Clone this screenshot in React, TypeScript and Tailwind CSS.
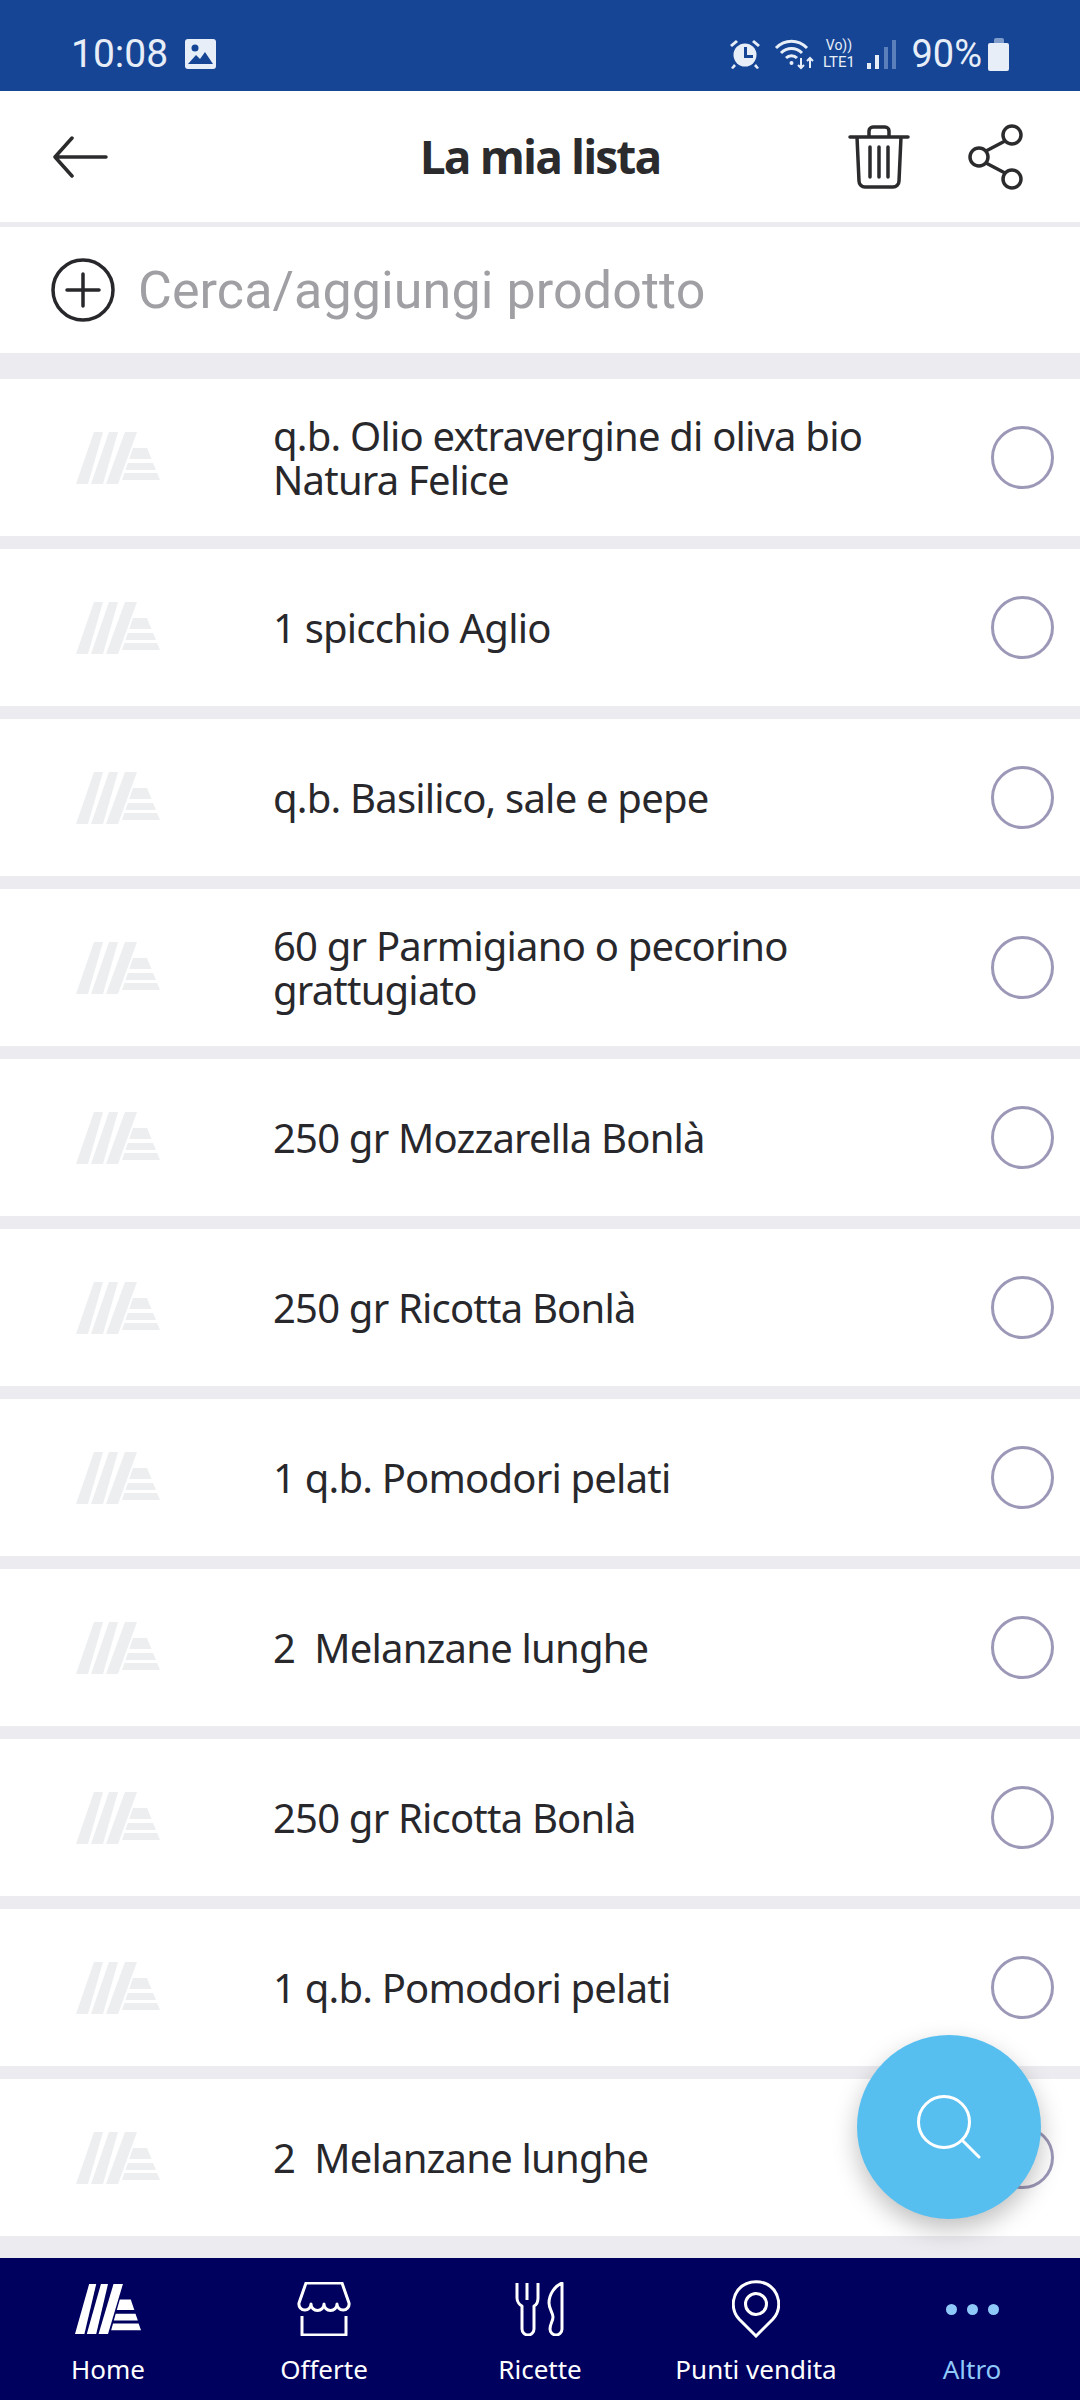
const items = [
  'q.b. Olio extravergine di oliva bio Natura Felice',
  '1 spicchio Aglio',
  'q.b. Basilico, sale e pepe',
  '60 gr Parmigiano o pecorino grattugiato',
  '250 gr Mozzarella Bonlà',
  '250 gr Ricotta Bonlà',
  '1 q.b. Pomodori pelati',
  '2  Melanzane lunghe',
  '250 gr Ricotta Bonlà',
  '1 q.b. Pomodori pelati',
  '2  Melanzane lunghe',
];

function Logo({ className, fill }: { className: string; fill: string }) {
  return (
    <svg viewBox="0 0 84 52" preserveAspectRatio="none" className={className} fill={fill}>
      <path d="M18 0h9L12 52H0z" />
      <path d="M33 0h9L27 52H15z" />
      <path d="M49 0h12L42 52H30z" />
      <path d="M57 16h14l4.500 11H53.200z" />
      <path d="M51.800 31H77l3 7H49.400z" />
      <path d="M48.400 41H81l3 7H46z" />
    </svg>
  );
}

function ListRow({ label }: { label: string }) {
  return (
    <div className="flex h-[157px] shrink-0 items-center bg-white pl-[76px] pr-[26px]">
      <Logo className="h-[52px] w-[84px] shrink-0" fill="#eceef0" />
      <p className="ml-[113px] w-[640px] whitespace-pre-wrap text-[40px] leading-[44px] tracking-[-0.8px] text-[#28282c]">{label}</p>
      <span className="ml-auto h-[63px] w-[63px] shrink-0 rounded-full border-[3px] border-[#9c98b8]" />
    </div>
  );
}

function NavItem({ label, active, children }: { label: string; active?: boolean; children: React.ReactNode }) {
  return (
    <div className="flex flex-col items-center">
      <div className="flex h-[58px] items-center justify-center">{children}</div>
      <span className={`mt-[13px] text-[26px] leading-[36px] ${active ? 'text-[#8ec9f9]' : 'text-white'}`}>{label}</span>
    </div>
  );
}

export default function App() {
  return (
    <div className="relative flex h-[2400px] w-[1080px] flex-col overflow-hidden bg-[#ecebef] font-['Noto_Sans',sans-serif]">
      {/* status bar */}
      <div className="flex h-[91px] shrink-0 items-center bg-[#164595] pl-[71px] pr-[71px] pt-[17px] font-['Roboto',sans-serif] text-[#e8eef8]">
        <span className="text-[39px] leading-none">10:08</span>
        <svg viewBox="0 0 31 30" className="ml-[17px] h-[30px] w-[31px]">
          <rect width="31" height="30" rx="3" fill="#e8eef8" />
          <circle cx="10" cy="9" r="3.5" fill="#164595" />
          <path d="M3 25l8-9 4 4 5-7 8 12z" fill="#164595" />
        </svg>
        <svg viewBox="0 0 32 30" className="ml-auto h-[30px] w-[32px]" fill="#e8eef8">
          <circle cx="16" cy="16" r="11.5" />
          <path d="M15 8h3v8h6v3h-9z" fill="#164595" />
          <path d="M1 6l6-5 2 2-6 5zM31 6l-6-5-2 2 6 5zM5 25l-3 4 2 1 3-3zM27 25l3 4-2 1-3-3z" />
        </svg>
        <svg viewBox="0 0 42 32" className="ml-[13px] h-[32px] w-[42px]" fill="none" stroke="#e8eef8" strokeWidth="3">
          <path d="M2 10c9-9 22-9 31 0M7 15c6-6 15-6 21 0M12 20c3-3 8-3 11 0" />
          <circle cx="17.5" cy="25" r="2" fill="#e8eef8" stroke="none" />
          <path d="M27 20v10M24 27l3 3 3-3M36 30V20M33 23l3-3 3 3" strokeWidth="2" />
        </svg>
        <div className="ml-[3px] flex w-[40px] flex-col items-center text-[14px] leading-[17px]">
          <span>Vo))</span>
          <span className="text-[15px]">LTE1</span>
        </div>
        <div className="ml-[8px] flex h-[29px] items-end gap-[4.5px]">
          <span className="h-[6px] w-[4px] bg-[#e8eef8]" />
          <span className="h-[14px] w-[4px] bg-[#e8eef8]" />
          <span className="h-[22px] w-[4px] bg-[#5b7fbb]" />
          <span className="h-[29px] w-[4px] bg-[#5b7fbb]" />
        </div>
        <span className="ml-[15px] text-[38px] leading-none">90%</span>
        <div className="ml-[6px] flex flex-col items-center">
          <span className="h-[5px] w-[10px] rounded-t-[2px] bg-[#7f9ccb]" />
          <span className="h-[28px] w-[21px] rounded-[2px] bg-[#e8eef8]" />
        </div>
      </div>

      {/* header */}
      <div className="relative flex h-[131px] shrink-0 items-center bg-white pl-[52px] pr-[56px]">
        <svg viewBox="0 0 56 42" className="h-[42px] w-[56px]" fill="none" stroke="#2b2b2e" strokeWidth="3.5" strokeLinecap="round" strokeLinejoin="round">
          <path d="M54 21H3M20 2L3 21l17 19" />
        </svg>
        <h1 className="absolute left-0 right-0 text-center font-['Open_Sans',sans-serif] text-[46px] font-bold tracking-[-1.9px] text-[#2b2b2e]">La mia lista</h1>
        <svg viewBox="0 0 62 64" className="ml-auto h-[64px] w-[62px]" fill="none" stroke="#2b2b2e" strokeWidth="3.5" strokeLinecap="round" strokeLinejoin="round">
          <path d="M2 12h58M21 12V6a4 4 0 0 1 4-4h12a4 4 0 0 1 4 4v6M9 12l2 44a6 6 0 0 0 6 6h28a6 6 0 0 0 6-6l2-44M22 22v30M31 22v30M40 22v30" />
        </svg>
        <svg viewBox="0 0 56 66" className="ml-[58px] h-[66px] w-[56px]" fill="none" stroke="#2b2b2e" strokeWidth="3.5">
          <circle cx="44" cy="11" r="9" />
          <circle cx="11" cy="33" r="9" />
          <circle cx="44" cy="55" r="9" />
          <path d="M37 17L18 27M18 39l19 10" />
        </svg>
      </div>

      {/* search */}
      <div className="mt-[5px] flex h-[126px] shrink-0 items-center bg-white pl-[51px]">
        <svg viewBox="0 0 64 64" className="h-[64px] w-[64px]" fill="none" stroke="#28282c" strokeWidth="3.5" strokeLinecap="round">
          <circle cx="32" cy="32" r="30" />
          <path d="M16 32h32M32 16v32" />
        </svg>
        <span className="ml-[23px] pt-[2px] font-['Roboto',sans-serif] text-[52px] tracking-[0.1px] text-[#a0a0a4]">Cerca/aggiungi prodotto</span>
      </div>

      {/* list */}
      <div className="mt-[26px] flex flex-1 flex-col gap-[13px] overflow-hidden">
        {items.map((label, i) => (
          <ListRow key={i} label={label} />
        ))}
      </div>

      {/* bottom nav */}
      <div className="grid h-[142px] shrink-0 grid-cols-5 bg-[#00005f] pt-[22px]">
        <NavItem label="Home">
          <Logo className="h-[50px] w-[66px]" fill="#ffffff" />
        </NavItem>
        <NavItem label="Offerte">
          <svg viewBox="0 0 54 54" className="h-[54px] w-[54px]" fill="none" stroke="#ffffff" strokeWidth="3" strokeLinejoin="round">
            <path d="M9 1h36l7 20a6 6 0 0 1-6 7 6 6 0 0 1-6-6 6.500 6.500 0 0 1-13 0 6.500 6.500 0 0 1-13 0 6 6 0 0 1-6 6 6 6 0 0 1-6-7z" />
            <path d="M5 34v19h44V34" />
          </svg>
        </NavItem>
        <NavItem label="Ricette">
          <svg viewBox="0 0 50 54" className="h-[54px] w-[50px]" fill="none" stroke="#ffffff" strokeWidth="3" strokeLinejoin="round">
            <path d="M2 1v15c0 4 3 7 5 8v23a6 6 0 0 0 12 0V24c2-1 4-4 4-8V1M12 1v17" />
            <path d="M47 1v46a6 6 0 0 1-12 0c0-5 3-8 3-12s-4-8-4-14C34 12 40 4 47 1z" />
          </svg>
        </NavItem>
        <NavItem label="Punti vendita">
          <svg viewBox="0 0 48 58" className="h-[58px] w-[48px]" fill="none" stroke="#ffffff" strokeWidth="3">
            <path d="M24 56L7 39C-1 30 0 18 6 10 15-1 33-1 42 10c6 8 7 20-1 29z" />
            <circle cx="24" cy="24" r="10.500" />
          </svg>
        </NavItem>
        <NavItem label="Altro" active>
          <div className="flex gap-[10px]">
            <span className="h-[11px] w-[11px] rounded-full bg-[#8ec9f9]" />
            <span className="h-[11px] w-[11px] rounded-full bg-[#8ec9f9]" />
            <span className="h-[11px] w-[11px] rounded-full bg-[#8ec9f9]" />
          </div>
        </NavItem>
      </div>

      {/* search fab */}
      <div className="absolute bottom-[181px] right-[39px] flex h-[184px] w-[184px] items-center justify-center rounded-full bg-[#57bff0] shadow-[0_10px_24px_rgba(0,0,0,0.25)]">
        <svg viewBox="0 0 64 64" className="h-[64px] w-[64px]" fill="none" stroke="#ffffff" strokeWidth="3" strokeLinecap="round">
          <circle cx="27" cy="27" r="25.500" />
          <path d="M45 45l17 17" />
        </svg>
      </div>
    </div>
  );
}
